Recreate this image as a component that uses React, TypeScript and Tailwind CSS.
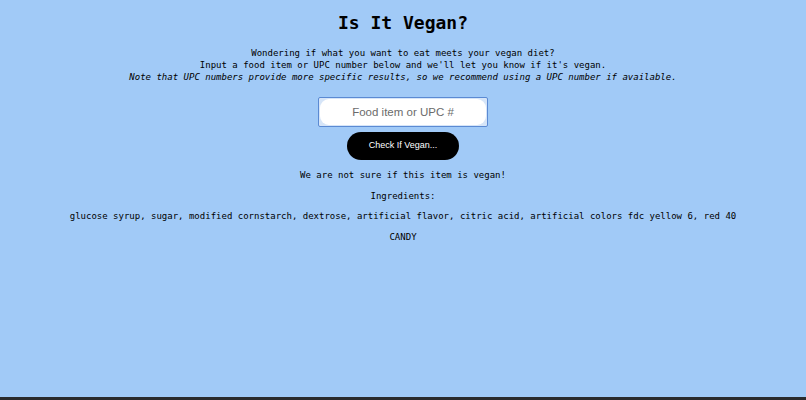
import { useState } from 'react';

const mono = 'font-["DejaVu_Sans_Mono","Liberation_Mono",monospace]';

export default function App() {
  const [query, setQuery] = useState('');

  return (
    <div className="flex h-[400px] w-full flex-col bg-[#2a2b2d]">
      <main className={`flex h-[397px] flex-col items-center bg-[#a1caf7] text-black ${mono}`}>
        <h1 className="pt-[11px] text-[18px] font-bold leading-[24px]">Is It Vegan?</h1>

        {/* intro copy */}
        <div className="mt-[12px] text-center text-[9px] leading-[12px]">
          <p>Wondering if what you want to eat meets your vegan diet?</p>
          <p>Input a food item or UPC number below and we'll let you know if it's vegan.</p>
          <p className="italic">
            Note that UPC numbers provide more specific results, so we recommend using a UPC number if available.
          </p>
        </div>

        {/* search */}
        <div className="mt-[14px] flex h-[30px] w-[170px] rounded-[2px] border border-[#5b8ad3] bg-[#d6e5f8] p-[1px]">
          <input
            value={query}
            onChange={(e) => setQuery(e.target.value)}
            placeholder="Food item or UPC #"
            className='h-full w-full rounded-[9px] bg-white text-center font-["Liberation_Sans",Arial,sans-serif] text-[11.5px] text-[#333] outline-none placeholder:text-[#6b6b6b]'
          />
        </div>
        <button className='mt-[5px] h-[28px] w-[112px] rounded-full bg-black font-["Liberation_Sans",Arial,sans-serif] text-[9px] text-white'>
          Check If Vegan...
        </button>

        {/* result */}
        <p className="mt-[9px] text-[9px] leading-[12px]">We are not sure if this item is vegan!</p>
        <p className="mt-[9px] text-[9px] leading-[12px]">Ingredients:</p>
        <p className="mt-[8px] text-[9px] leading-[12px]">
          glucose syrup, sugar, modified cornstarch, dextrose, artificial flavor, citric acid, artificial colors fdc yellow 6, red 40
        </p>
        <p className="mt-[9px] text-[9px] leading-[12px]">CANDY</p>
      </main>
    </div>
  );
}
